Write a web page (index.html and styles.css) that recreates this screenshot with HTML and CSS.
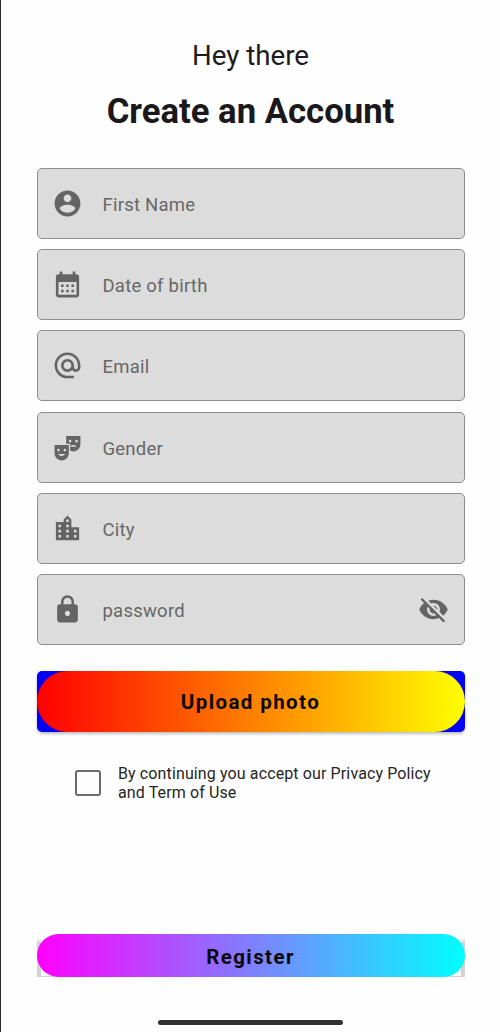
FILE: index.html
```html
<!DOCTYPE html>
<html lang="en">
<head>
<meta charset="utf-8">
<title>Create an Account</title>
<link rel="stylesheet" href="styles.css">
</head>
<body>
<main class="screen">
  <p class="greeting">Hey there</p>
  <h1 class="title">Create an Account</h1>
  <div class="fields">
    <div class="field">
      <svg class="icon" viewBox="0 0 24 24"><path d="M12 2C6.48 2 2 6.48 2 12s4.48 10 10 10 10-4.48 10-10S17.52 2 12 2zm0 3c1.66 0 3 1.34 3 3s-1.34 3-3 3-3-1.34-3-3 1.34-3 3-3zm0 14.2c-2.5 0-4.71-1.28-6-3.22.03-1.99 4-3.08 6-3.08 1.99 0 5.97 1.09 6 3.08-1.29 1.94-3.5 3.22-6 3.22z"/></svg>
      <span class="label">First Name</span>
    </div>
    <div class="field">
      <svg class="icon" viewBox="0 0 24 24"><path d="M19 4h-1V2h-2v2H8V2H6v2H5c-1.11 0-1.99.9-1.99 2L3 20c0 1.1.89 2 2 2h14c1.1 0 2-.9 2-2V6c0-1.1-.9-2-2-2zm0 16H5V10h14v10zM9 14H7v-2h2v2zm4 0h-2v-2h2v2zm4 0h-2v-2h2v2zm-8 4H7v-2h2v2zm4 0h-2v-2h2v2zm4 0h-2v-2h2v2z"/></svg>
      <span class="label">Date of birth</span>
    </div>
    <div class="field">
      <svg class="icon" viewBox="0 0 24 24"><path d="M12 1.95c-5.52 0-10 4.48-10 10s4.48 10 10 10h5v-2h-5c-4.34 0-8-3.66-8-8s3.66-8 8-8 8 3.66 8 8v1.43c0 .79-.71 1.57-1.5 1.57s-1.5-.78-1.5-1.57v-1.43c0-2.76-2.24-5-5-5s-5 2.24-5 5 2.24 5 5 5c1.38 0 2.64-.56 3.54-1.47.65.89 1.77 1.47 2.96 1.47 1.97 0 3.5-1.6 3.5-3.57v-1.43c0-5.52-4.48-10-10-10zm0 13c-1.66 0-3-1.34-3-3s1.34-3 3-3 3 1.34 3 3-1.34 3-3 3z"/></svg>
      <span class="label">Email</span>
    </div>
    <div class="field">
      <svg class="icon" viewBox="0 0 24 24"><path fill-rule="evenodd" d="M2 16.5C2 19.54 4.46 22 7.5 22s5.5-2.46 5.5-5.5V10H2v6.500zM7.500 18.500C6.120 18.500 5 17.830 5 17h5c0 .83-1.120 1.500-2.500 1.500zM10 13a1 1 0 1 1 0 2 1 1 0 0 1 0-2zM5 13a1 1 0 1 1 0 2 1 1 0 0 1 0-2z"/><path fill-rule="evenodd" d="M11 3v6h3v5.390c.75.380 1.600.610 2.500.610 3.040 0 5.500-2.460 5.500-5.500V3H11zm3 5.080a1 1 0 1 1 0-2 1 1 0 0 1 0 2zm0 3.420c0-.83 1.120-1.500 2.500-1.500s2.500.67 2.500 1.500h-5zm5-3.420a1 1 0 1 1 0-2 1 1 0 0 1 0 2z"/></svg>
      <span class="label">Gender</span>
    </div>
    <div class="field">
      <svg class="icon" viewBox="0 0 24 24"><path d="M15 11V5l-3-3-3 3v2H3v14h18V11h-6zm-8 8H5v-2h2v2zm0-4H5v-2h2v2zm0-4H5V9h2v2zm6 8h-2v-2h2v2zm0-4h-2v-2h2v2zm0-4h-2V9h2v2zm0-4h-2V5h2v2zm6 12h-2v-2h2v2zm0-4h-2v-2h2v2z"/></svg>
      <span class="label">City</span>
    </div>
    <div class="field">
      <svg class="icon" viewBox="0 0 24 24"><path d="M18 8h-1V6c0-2.760-2.240-5-5-5S7 3.240 7 6v2H6c-1.100 0-2 .9-2 2v10c0 1.100.9 2 2 2h12c1.100 0 2-.9 2-2V10c0-1.100-.9-2-2-2zm-6 9c-1.100 0-2-.9-2-2s.9-2 2-2 2 .9 2 2-.9 2-2 2zm3.100-9H8.900V6c0-1.710 1.390-3.100 3.100-3.100s3.100 1.390 3.100 3.100v2z"/></svg>
      <span class="label">password</span>
      <svg class="icon" viewBox="0 0 24 24"><path d="M12 7c2.760 0 5 2.240 5 5 0 .65-.13 1.260-.36 1.830l2.920 2.920c1.510-1.260 2.700-2.890 3.430-4.750-1.730-4.390-6-7.500-11-7.500-1.400 0-2.740.25-3.980.7l2.160 2.160C10.740 7.130 11.350 7 12 7zM2 4.270l2.280 2.280.46.46C3.080 8.300 1.780 10.020 1 12c1.730 4.390 6 7.500 11 7.500 1.550 0 3.030-.3 4.380-.84l.42.42L19.730 22 21 20.730 3.270 3 2 4.270zM7.530 9.800l1.550 1.550c-.05.21-.08.43-.08.65 0 1.660 1.340 3 3 3 .22 0 .44-.03.65-.08l1.550 1.550c-.67.33-1.410.53-2.200.53-2.760 0-5-2.240-5-5 0-.79.2-1.530.53-2.200zm4.310-.78l3.150 3.150.02-.16c0-1.660-1.340-3-3-3l-.17.01z"/></svg>
    </div>
  </div>
  <div class="upload"><button class="pill upload-pill">Upload photo</button></div>
  <div class="terms">
    <span class="checkbox"></span>
    <p class="terms-text">By continuing you accept our Privacy Policy<br>and Term of Use</p>
  </div>
  <div class="register"><button class="pill register-pill">Register</button></div>
  <div class="home-bar"></div>
</main>
</body>
</html>
```
FILE: styles.css
```css
* { box-sizing: border-box; }
body {
  margin: 0;
  background: #fefefe;
  font-family: Roboto, "Liberation Sans", sans-serif;
}
.screen {
  display: flex;
  flex-direction: column;
  height: 1032px;
  padding: 38px 35.500px 0 35.500px;
  border-left: 1px solid #29292b;
  overflow: hidden;
}
.greeting {
  margin: 0;
  font-size: 27.700px;
  line-height: 36px;
  text-align: center;
  color: #1d1b1d;
}
.title {
  margin: 16px 0 0;
  font-size: 34.700px;
  line-height: 42px;
  font-weight: 700;
  text-align: center;
  color: #1a181a;
}
.fields {
  display: flex;
  flex-direction: column;
  gap: 10.200px;
  margin-top: 36px;
}
.field {
  display: flex;
  align-items: center;
  height: 71px;
  padding: 0 15px 0 14px;
  border: 1.500px solid #8c8c8c;
  border-radius: 5px;
  background: #dcdcdc;
}
.icon {
  flex: none;
  width: 31px;
  height: 31px;
  fill: #646464;
}
.label {
  flex: 1;
  margin: 3px 0 0 20px;
  font-size: 18.500px;
  line-height: 24px;
  letter-spacing: 0.230px;
  color: #676767;
}
.pill {
  display: block;
  width: 100%;
  height: 100%;
  padding: 1px 0 0;
  border: 0;
  border-radius: 31px;
  font: 700 20.500px/24px Roboto, "Liberation Sans", sans-serif;
  letter-spacing: 1.400px;
  color: #0b0708;
}
.upload {
  flex: none;
  height: 61px;
  margin-top: 26px;
  border-radius: 5px;
  background: #0000fa;
  box-shadow: 0 2px 3px rgba(0, 0, 0, 0.25);
}
.upload-pill { background: linear-gradient(90deg, #ff0000, #ffff00); }
.terms {
  display: flex;
  align-items: center;
  margin: 32px 0 0 38px;
}
.checkbox {
  width: 26px;
  height: 26px;
  border: 2.500px solid #6b6a6b;
  border-radius: 3px;
}
.terms-text {
  margin: 0 0 0 17.500px;
  font-size: 16px;
  line-height: 19.500px;
  letter-spacing: 0.120px;
  white-space: nowrap;
  color: #262526;
}
.register {
  flex: none;
  height: 42.500px;
  margin-top: 131.500px;
  background: linear-gradient(#fefefe 0 4px, transparent 9px), linear-gradient(#fefefe, #fefefe) center / 420px 40px no-repeat, #d2d2d2;
}
.register-pill {
  padding-top: 2px;
  background: linear-gradient(90deg, #ff00ff, #00ffff);
}
.home-bar {
  flex: none;
  align-self: center;
  width: 185px;
  height: 5px;
  margin-top: 43px;
  border-radius: 3px;
  background: #333033;
}
```
